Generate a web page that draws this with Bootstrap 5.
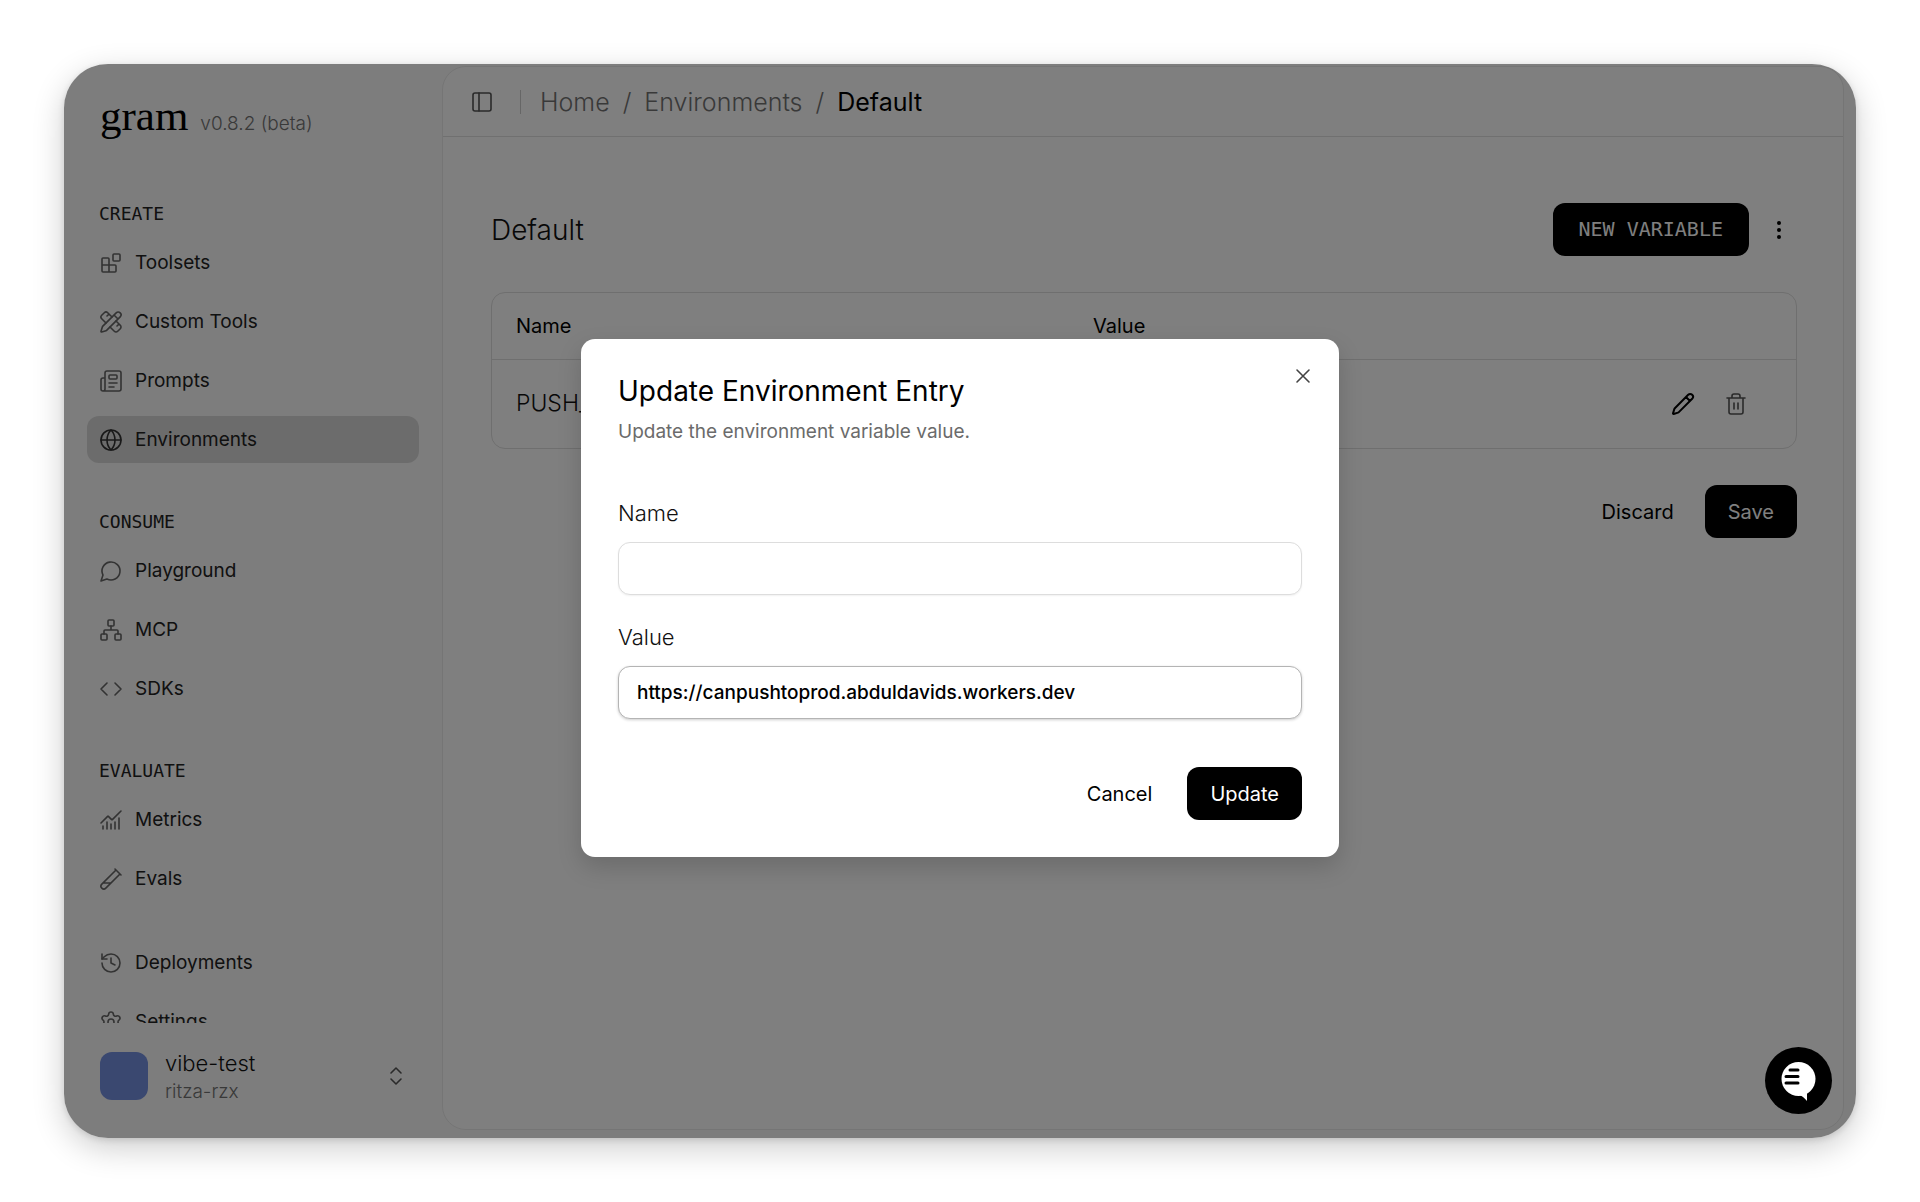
<!DOCTYPE html>
<html lang="en">
<head>
<meta charset="utf-8">
<meta name="viewport" content="width=device-width, initial-scale=1">
<title>Gram – Environments</title>
<link href="https://cdn.jsdelivr.net/npm/bootstrap@5.3.0/dist/css/bootstrap.min.css" rel="stylesheet">
<style>
  :root { --ui: Inter, "Liberation Sans", sans-serif; --mono: "DejaVu Sans Mono", "Liberation Mono", monospace; --line: #dedede; --muted: #737373; }
  body { font-family: var(--ui); font-size: 19px; line-height: 24px; font-weight: 300; color: #111; background: #fff; padding: 64px; height: 100vh; }
  a { color: inherit; text-decoration: none; }
  .app-frame { height: 100%; border-radius: 44px; background: #fafafa; box-shadow: 0 10px 32px rgba(0,0,0,.2), 0 2px 6px rgba(0,0,0,.12); }
  .ico { width: 24px; height: 24px; flex: none; fill: none; stroke: currentColor; stroke-width: 1.6; stroke-linecap: round; stroke-linejoin: round; }

  .side { width: 378px; flex: none; }
  .brand { height: 138px; padding: 28px 36px 0; gap: 12px; }
  .brand-name { font-family: "Liberation Serif", serif; font-size: 43px; line-height: 48px; font-weight: 400; color: #000; }
  .brand-ver { color: var(--muted); }
  .side-nav { padding: 0 23px; gap: 47px; min-height: 0; }
  .side-group { gap: 12px; flex: none; }
  .side-group.tight { margin-top: -10px; }
  .side-title { font-family: var(--mono); font-size: 18px; line-height: 24px; font-weight: 400; color: #222; padding-left: 12px; margin: 0 0 1px; }
  .side-link { height: 47px; padding: 0 12px; gap: 12px; border-radius: 12px; font-weight: 400; color: #222; }
  .side-link .ico { color: #666; }
  .side-link.active { background: #d8d8d8; }
  .side-link.active .ico { color: #333; }
  .account { height: 115px; padding: 0 34px 9px 36px; gap: 17px; }
  .account-pic { width: 48px; height: 48px; border-radius: 12px; background: #7490e0; }
  .account-name { font-size: 22px; line-height: 28px; padding-top: 4px; }
  .account-org { color: var(--muted); line-height: 30px; }
  .account .ico { color: #555; }

  .inset { margin: 2px 12px 8px 0; border: 1px solid #ebebeb; border-radius: 24px; background: #fff; min-width: 0; }
  .top { height: 70px; padding-left: 27px; gap: 26px; border-bottom: 1px solid #e0e0e0; }
  .top .ico { color: #555; }
  .top-sep { width: 1px; height: 24px; background: #ccc; }
  .crumbs { font-size: 25px; line-height: 32px; gap: 13px; color: var(--muted); margin-left: -7px; }
  .crumbs .here { color: #000; font-weight: 400; }
  .page { padding: 66px 46px 0 48px; gap: 36px; }
  .page-title { font-size: 28px; line-height: 36px; font-weight: 300; margin: 0; }
  .bt { height: 53px; border: 0; border-radius: 12px; padding: 0 23px; font-size: 20px; font-weight: 400; background: transparent; color: #000; }
  .bt-dark { background: #000; color: #fff; }
  .bt-mono { font-family: var(--mono); font-size: 20px; font-weight: 400; padding: 0 26px 2px; }
  .bt-icon { border: 0; background: transparent; padding: 0; width: 36px; height: 36px; }
  .bt-soft { color: #555; }
  .grid-box { border: 1px solid var(--line); border-radius: 14px; }
  .vars { table-layout: fixed; width: 100%; margin: 0; }
  .vars th { height: 66px; font-size: 20px; font-weight: 400; color: #000; padding: 0 24px; border-bottom: 1px solid var(--line); }
  .vars td { height: 89px; font-size: 23px; padding: 0 24px 2px; }
  .vars .c1 { width: 577px; }
  .vars .c3 { width: 180px; }
  .row-acts { gap: 17px; padding-right: 18px; }
  .stroke-2 { stroke-width: 2; }

  .dim { background: rgba(0,0,0,.5); border-radius: 44px; padding-bottom: 6px; }
  .dialog { width: 758px; max-width: 100%; padding: 37px; border-radius: 14px; background: #fff; box-shadow: 0 10px 24px rgba(0,0,0,.16); color: #111; }
  .dialog-x { top: 19px; right: 18px; color: #444; }
  .dialog-title { font-size: 28px; line-height: 30px; font-weight: 400; color: #000; margin: 0 0 14px; }
  .dialog-text { color: #6b6b6b; font-weight: 400; margin: 0 0 57px; }
  .field { margin-bottom: 30px; }
  .field label { display: block; font-size: 22px; line-height: 24px; margin-bottom: 17px; }
  .field input { display: block; width: 100%; height: 53px; border: 1px solid #ddd; border-radius: 12px; padding: 0 18px; font-size: 19px; font-weight: 500; color: #000; background: #fff; box-shadow: 0 1px 2px rgba(0,0,0,.06); outline: 0; }
  .field .is-current { border-color: #b4b4b4; box-shadow: 0 1px 3px rgba(0,0,0,.2); }
  .dialog-acts { margin-top: 48px; gap: 12px; }
  .chat { right: 24px; bottom: 24px; width: 67px; height: 67px; border: 0; border-radius: 50%; background: #000; padding: 0; }
</style>
<script src="https://cdn.jsdelivr.net/npm/bootstrap@5.3.0/dist/js/bootstrap.bundle.min.js"></script>
</head>
<body>
<div class="app-frame position-relative d-flex">

  <aside class="side d-flex flex-column">
    <div class="brand d-flex align-items-baseline flex-shrink-0">
      <a href="#" class="brand-name">gram</a><span class="brand-ver">v0.8.2 (beta)</span>
    </div>
    <nav class="side-nav d-flex flex-column flex-grow-1 overflow-hidden">
      <div class="side-group d-flex flex-column">
        <h2 class="side-title">CREATE</h2>
        <a href="#" class="side-link d-flex align-items-center"><svg class="ico" viewBox="0 0 24 24"><rect width="7" height="7" x="14" y="3" rx="1"/><path d="M10 21V8a1 1 0 0 0-1-1H4a1 1 0 0 0-1 1v12a1 1 0 0 0 1 1h12a1 1 0 0 0 1-1v-5a1 1 0 0 0-1-1H3"/></svg>Toolsets</a>
        <a href="#" class="side-link d-flex align-items-center"><svg class="ico" viewBox="0 0 24 24"><path d="M13 7 8.7 2.7a2.41 2.41 0 0 0-3.4 0L2.7 5.3a2.41 2.41 0 0 0 0 3.4L7 13M8 6l2-2M18 16l2-2M17 11l4.3 4.3c.94.94.94 2.46 0 3.4l-2.6 2.6c-.94.94-2.46.94-3.4 0L11 17"/><path d="M21.174 6.812a1 1 0 0 0-3.986-3.987L3.842 16.174a2 2 0 0 0-.5.83l-1.321 4.352a.5.5 0 0 0 .623.622l4.353-1.32a2 2 0 0 0 .83-.497zM15 5l4 4"/></svg>Custom Tools</a>
        <a href="#" class="side-link d-flex align-items-center"><svg class="ico" viewBox="0 0 24 24"><path d="M15 18h-5M18 14h-8M4 22h16a2 2 0 0 0 2-2V4a2 2 0 0 0-2-2H8a2 2 0 0 0-2 2v16a2 2 0 0 1-4 0v-9a2 2 0 0 1 2-2h2"/><rect width="8" height="4" x="10" y="6" rx="1"/></svg>Prompts</a>
        <a href="#" class="side-link active d-flex align-items-center" aria-current="page"><svg class="ico" viewBox="0 0 24 24"><circle cx="12" cy="12" r="10"/><path d="M12 2a14.5 14.5 0 0 0 0 20 14.5 14.5 0 0 0 0-20M2 12h20"/></svg>Environments</a>
      </div>
      <div class="side-group d-flex flex-column">
        <h2 class="side-title">CONSUME</h2>
        <a href="#" class="side-link d-flex align-items-center"><svg class="ico" viewBox="0 0 24 24"><path d="M7.9 20A9 9 0 1 0 4 16.1L2 22Z"/></svg>Playground</a>
        <a href="#" class="side-link d-flex align-items-center"><svg class="ico" viewBox="0 0 24 24"><rect x="16" y="16" width="6" height="6" rx="1"/><rect x="2" y="16" width="6" height="6" rx="1"/><rect x="9" y="2" width="6" height="6" rx="1"/><path d="M5 16v-3a1 1 0 0 1 1-1h12a1 1 0 0 1 1 1v3M12 12V8"/></svg>MCP</a>
        <a href="#" class="side-link d-flex align-items-center"><svg class="ico" viewBox="0 0 24 24"><path d="m16 18 6-6-6-6M8 6l-6 6 6 6"/></svg>SDKs</a>
      </div>
      <div class="side-group d-flex flex-column">
        <h2 class="side-title">EVALUATE</h2>
        <a href="#" class="side-link d-flex align-items-center"><svg class="ico" viewBox="0 0 24 24"><path d="M12 16v5M16 14v7M20 10v11M22 3l-8.646 8.646a.5.5 0 0 1-.708 0L9.354 8.354a.5.5 0 0 0-.707 0L2 15M4 18v3M8 14v7"/></svg>Metrics</a>
        <a href="#" class="side-link d-flex align-items-center"><svg class="ico" viewBox="0 0 24 24"><path d="M21 7 6.82 21.18a2.83 2.83 0 0 1-3.99-.01 2.83 2.83 0 0 1 0-4L17 3M16 2l6 6M12 16H4"/></svg>Evals</a>
      </div>
      <div class="side-group tight d-flex flex-column">
        <a href="#" class="side-link d-flex align-items-center"><svg class="ico" viewBox="0 0 24 24"><path d="M3 12a9 9 0 1 0 9-9 9.75 9.75 0 0 0-6.74 2.74L3 8"/><path d="M3 3v5h5M12 7v5l4 2"/></svg>Deployments</a>
        <a href="#" class="side-link d-flex align-items-center"><svg class="ico" viewBox="0 0 24 24"><path d="M9.671 4.136a2.34 2.34 0 0 1 4.659 0 2.34 2.34 0 0 0 3.319 1.915 2.34 2.34 0 0 1 2.33 4.033 2.34 2.34 0 0 0 0 3.831 2.34 2.34 0 0 1-2.33 4.033 2.34 2.34 0 0 0-3.319 1.915 2.34 2.34 0 0 1-4.659 0 2.34 2.34 0 0 0-3.32-1.915 2.34 2.34 0 0 1-2.33-4.033 2.34 2.34 0 0 0 0-3.831A2.34 2.34 0 0 1 6.35 6.051a2.34 2.34 0 0 0 3.319-1.915"/><circle cx="12" cy="12" r="3"/></svg>Settings</a>
      </div>
    </nav>
    <div class="account d-flex align-items-center flex-shrink-0">
      <span class="account-pic"></span>
      <div class="flex-grow-1"><div class="account-name">vibe-test</div><div class="account-org">ritza-rzx</div></div>
      <svg class="ico" viewBox="0 0 24 24"><path d="m7 15 5 5 5-5M7 9l5-5 5 5"/></svg>
    </div>
  </aside>

  <main class="inset flex-grow-1">
    <header class="top d-flex align-items-center">
      <button class="bt-icon w-auto" aria-label="Toggle sidebar"><svg class="ico d-block" viewBox="0 0 24 24"><rect width="18" height="18" x="3" y="3" rx="2"/><path d="M9 3v18"/></svg></button>
      <span class="top-sep"></span>
      <nav class="crumbs d-flex"><a href="#">Home</a><span>/</span><a href="#">Environments</a><span>/</span><span class="here">Default</span></nav>
    </header>
    <div class="page d-flex flex-column">
      <div class="d-flex align-items-center justify-content-between">
        <h1 class="page-title">Default</h1>
        <div class="d-flex align-items-center gap-2">
          <button class="bt bt-dark bt-mono">NEW VARIABLE</button>
          <button class="bt-icon ms-1" aria-label="More"><svg class="ico" viewBox="0 0 24 24"><circle cx="12" cy="5" r="1.2" fill="currentColor"/><circle cx="12" cy="12" r="1.2" fill="currentColor"/><circle cx="12" cy="19" r="1.2" fill="currentColor"/></svg></button>
        </div>
      </div>
      <div class="grid-box">
        <table class="vars">
          <thead><tr><th class="c1">Name</th><th>Value</th><th class="c3"></th></tr></thead>
          <tbody><tr><td>PUSH_</td><td></td><td><div class="row-acts d-flex justify-content-end">
            <button class="bt-icon" aria-label="Edit"><svg class="ico stroke-2" viewBox="0 0 24 24"><path d="M21.174 6.812a1 1 0 0 0-3.986-3.987L3.842 16.174a2 2 0 0 0-.5.83l-1.321 4.352a.5.5 0 0 0 .623.622l4.353-1.32a2 2 0 0 0 .83-.497zM15 5l4 4"/></svg></button>
            <button class="bt-icon bt-soft" aria-label="Delete"><svg class="ico" viewBox="0 0 24 24"><path d="M3 6h18M19 6v14c0 1-1 2-2 2H7c-1 0-2-1-2-2V6M8 6V4c0-1 1-2 2-2h4c1 0 2 1 2 2v2M10 11v6M14 11v6"/></svg></button>
          </div></td></tr></tbody>
        </table>
      </div>
      <div class="d-flex justify-content-end gap-2">
        <button class="bt">Discard</button>
        <button class="bt bt-dark">Save</button>
      </div>
    </div>
  </main>

  <div class="dim position-absolute top-0 start-0 w-100 h-100 d-flex align-items-center justify-content-center">
    <form class="dialog position-relative" role="dialog" aria-labelledby="dlg-title">
      <button type="button" class="dialog-x bt-icon position-absolute" aria-label="Close"><svg class="ico" viewBox="0 0 24 24"><path d="M18 6 6 18M6 6l12 12"/></svg></button>
      <h2 class="dialog-title" id="dlg-title">Update Environment Entry</h2>
      <p class="dialog-text">Update the environment variable value.</p>
      <div class="field"><label for="f-name">Name</label><input id="f-name" type="text"></div>
      <div class="field"><label for="f-value">Value</label><input id="f-value" class="is-current" type="text" value="https://canpushtoprod.abduldavids.workers.dev"></div>
      <div class="dialog-acts d-flex justify-content-end"><button type="button" class="bt">Cancel</button><button type="button" class="bt bt-dark">Update</button></div>
    </form>
  </div>

  <button class="chat position-absolute" aria-label="Open chat"><svg width="67" height="67" viewBox="0 0 67 67"><circle cx="33.500" cy="32" r="17" fill="#fff"/><path d="M34 48c3 .5 5 2.500 8 6V44z" fill="#fff"/><path d="M25 23h8M21 29.500h12M21 36h12" stroke="#000" stroke-width="3" stroke-linecap="round"/></svg></button>
</div>
</body>
</html>
